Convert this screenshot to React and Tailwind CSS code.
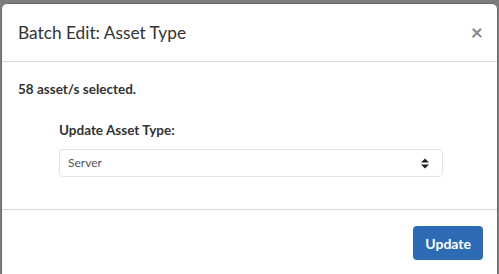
import React from 'react';

export default function App() {
  return (
    <div className="h-[274px] w-[499px] overflow-hidden bg-[#7d7d7d] pl-[1px] pr-[1px] pt-[3px]" style={{ fontFamily: 'Lato, "Open Sans", sans-serif' }}>
      <div className="h-[300px] rounded-t-[6px] border border-[#6b6b6b] bg-white text-[#333]">
        <div className="flex items-center justify-between border-b border-[#d9d9d9] px-4 py-[15px]">
          <h4 className="text-[17.3px] leading-[27px] font-normal">Batch Edit: Asset Type</h4>
          <button className="-mt-[2px] -mr-[2px] text-[21px] leading-none font-bold text-[#888]">×</button>
        </div>

        <div className="h-[147px] px-4 pt-[17px]">
          <p className="text-[13.5px] leading-5 font-bold">58 asset/s selected.</p>
          <div className="mt-[21px] ml-[41px] w-[384px]">
            <label className="block text-[13.5px] leading-5 font-bold">Update Asset Type:</label>
            <div className="mt-[9px] flex h-[28px] items-center justify-between rounded-[4px] border border-[#e3e3e3] pl-[8px] pr-[13px]">
              <span className="text-[12px] text-[#555]">Server</span>
              <svg width="8" height="11" viewBox="0 0 8 11" className="text-[#222]">
                <path d="M0 4.5 L4 0.5 L8 4.5 Z" fill="currentColor" />
                <path d="M0 6.5 L4 10.5 L8 6.5 Z" fill="currentColor" />
              </svg>
            </div>
          </div>
        </div>

        <div className="flex justify-end border-t border-[#d5d5d5] px-[14px] pt-[16px]">
          <button className="h-[34px] rounded-[4px] bg-[#2d6cb4] px-[12px] text-[14px] font-bold text-white">Update</button>
        </div>
      </div>
    </div>
  );
}
